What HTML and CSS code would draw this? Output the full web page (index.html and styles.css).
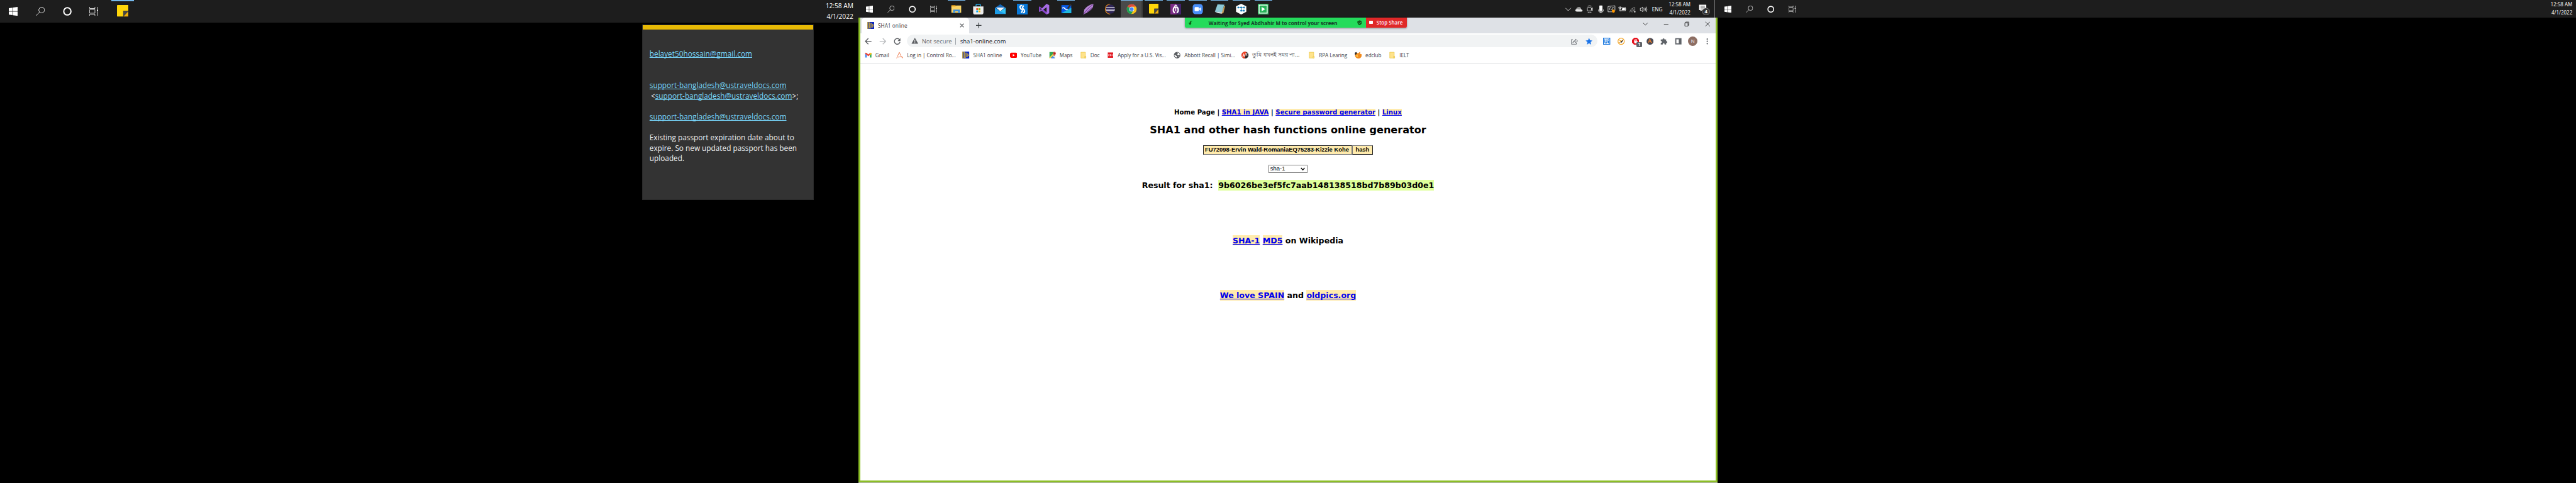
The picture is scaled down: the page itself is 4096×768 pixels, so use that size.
FILE: index.html
```
<!DOCTYPE html>
<html lang="en">
<head>
<meta charset="utf-8">
<title>Desktop</title>
<link rel="stylesheet" href="styles.css">
</head>
<body>
<svg class="defs" aria-hidden="true">
  <symbol id="win" viewBox="0 0 20 20"><path fill="#fff" d="M0 2.8 8.2 1.7V9.5H0zM9.2 1.5 20 0V9.5H9.2zM0 10.5H8.2V18.3L0 17.2zM9.2 10.5H20V20L9.2 18.5z"/></symbol>
  <symbol id="search" viewBox="0 0 20 20"><g fill="none" stroke="#fff" stroke-width="1.2"><circle cx="13" cy="7" r="6.4"/><path d="M8.4 11.6 .4 19.6"/></g></symbol>
  <symbol id="cortana" viewBox="0 0 20 20"><circle cx="10" cy="10" r="8.1" fill="none" stroke="#fff" stroke-width="2.8"/></symbol>
  <symbol id="taskview" viewBox="0 0 20 20"><g fill="none" stroke="#fff" stroke-width="1.1"><path d="M.6 0v3.5h12V0M.6 20v-3.5h12V20M.6 6h12v8H.6zM18.5 0v5M18.5 10v10"/></g><rect x="17" y="6" width="3" height="3" fill="#fff"/></symbol>
  <symbol id="note" viewBox="0 0 26 26"><path fill="#ffd60a" d="M1 0H25L26 1V13H14V26H1L0 25V1z"/><path fill="#f0ae0b" d="M26 13V25L25 26H14z"/><path fill="#474747" d="M14 13H26L14 26z"/></symbol>
  <symbol id="sha" viewBox="0 0 16 16"><path fill="#0a26c4" d="M0 0H16V16H0z"/><path fill="none" stroke="#f5c518" stroke-width="1.1" d="M.6 0V16M2.6 16V1H5V14H7.400V3H9.600V12H11.600V5H13V9H16"/></symbol>
  <symbol id="folder" viewBox="0 0 16 16"><path fill="#ffe38b" stroke="#e8c546" d="M2.500 1.500H12.500V14.500H2.500z"/><path fill="#ffe38b" stroke="#e8c546" d="M11 10.500h2.500v4H11z"/></symbol>
</svg>

<main class="desktop">
  <section class="screen">
    <header class="taskbar tall">
      <span class="cell"><svg><use href="#win"/></svg></span>
      <span class="cell"><svg><use href="#search"/></svg></span>
      <span class="cell"><svg><use href="#cortana"/></svg></span>
      <span class="cell"><svg><use href="#taskview"/></svg></span>
      <span class="cell app open"><svg><use href="#note"/></svg></span>
      <div class="clock"><span>12:58 AM</span><span>4/1/2022</span></div>
    </header>
    <article class="sticky">
      <p><a>belayet50hossain@gmail.com</a></p>
      <p class="gap2"><a>support-bangladesh@ustraveldocs.com</a><br><i>&lt;</i><a>support-bangladesh@ustraveldocs.com</a>&gt;;</p>
      <p class="gap1"><a>support-bangladesh@ustraveldocs.com</a></p>
      <p class="gap1">Existing passport expiration date about to<br>expire. So new updated passport has been<br>uploaded.</p>
    </article>
  </section>

  <section class="screen">
    <header class="taskbar primary">
      <span class="cell"><svg><use href="#win"/></svg></span>
      <span class="cell"><svg><use href="#search"/></svg></span>
      <span class="cell"><svg><use href="#cortana"/></svg></span>
      <span class="cell"><svg><use href="#taskview"/></svg></span>
      <div class="apps">
        <span class="app open"><svg viewBox="0 0 24 24"><path fill="#e8a317" d="M1 3h9l2 2v3H1z"/><path fill="#fbd364" d="M1 6h9l2-2h11v16H1z"/><path fill="#3c8fdc" d="M5 13h15v8h-4v-4H9v4H5z"/></svg></span>
        <span class="app"><svg viewBox="0 0 24 24"><path fill="none" stroke="#29b6f6" stroke-width="1.800" d="M7 6V2.500Q7 1.500 8 1.500h8q1 0 1 1V6"/><path fill="#ececec" d="M.5 6H23.500V20q0 4-4 4H4.500q-4 0-4-4z"/><path fill="#f25022" d="M7.500 10h4v4h-4z"/><path fill="#7fba00" d="M12.500 10h4v4h-4z"/><path fill="#00a4ef" d="M7.500 15h4v4h-4z"/><path fill="#ffb900" d="M12.500 15h4v4h-4z"/></svg></span>
        <span class="app"><svg viewBox="0 0 24 24"><path fill="#1466b8" d="M0 9 12 1l12 8v4H0z"/><path fill="#1c9be6" d="M0 9v14h24V9L12 17z"/><path fill="#33c1f4" d="M24 9v14L12 17z"/><path fill="#f1f6fa" d="M2.500 8.500h19L12 17z"/></svg></span>
        <span class="app open"><svg viewBox="0 0 24 24"><path fill="#0878d8" d="M0 0H24V24H0z"/><path fill="none" stroke="#fff" stroke-width="3" stroke-linecap="round" d="M10.500 4Q6 5 7 8.500T11 12.500Q14 15 10 19M14.500 5Q11 9 14 11.500T17 16Q17.500 19.500 14 20"/></svg></span>
        <span class="app"><svg viewBox="0 0 24 24"><path fill="#8645c9" d="M0 7 2 6 17 19v5L4 14 2 18 0 17z"/><path fill="#a56be3" d="M0 17 17 0l6 3v18l-6 3V8L2 18z"/><path fill="#1d1d1d" d="M3.500 10v5L6 12.500zM17 8v8l-5-4z"/></svg></span>
        <span class="app open"><svg viewBox="0 0 24 24"><path fill="#075be8" d="M1 3H23V21H1z"/><path fill="#20b8dd" d="M1 21 23 9V21z"/><path fill="none" stroke="#fff" stroke-width="2.200" d="M3 10Q6 7 9 11T15 12"/><path fill="none" stroke="#333" stroke-width="3.500" d="M15 11 22 1"/></svg></span>
        <span class="app"><svg viewBox="0 0 24 24"><path fill="#b989d8" d="M1 24 3 13Q10 3 23 0 24 8 17 14 10 20 1 24z"/><path fill="none" stroke="#713a94" stroke-width="1.500" d="M1 24Q10 10 22 2M9 19 20 9"/></svg></span>
        <span class="app"><svg viewBox="0 0 24 24"><path fill="none" stroke="#f2921d" stroke-width="1.600" d="M13 1A11 11 0 1 0 13 23"/><circle cx="13.500" cy="12" r="10.300" fill="#2f2657"/><path stroke="#fff" stroke-width="1.500" d="M4 9H23M3 12H24M4 15H23"/></svg></span>
        <span class="app open active"><svg viewBox="0 0 24 24"><circle cx="12" cy="12" r="11" fill="#fbc116"/><path fill="#dd4b3e" d="M12 12 2.500 6.500A11 11 0 0 1 21.500 6.500H12z"/><path fill="#1a9f57" d="M2.500 6.500A11 11 0 0 0 11 23L16 14.500 12 12z"/><circle cx="12" cy="12" r="5.400" fill="#fff"/><circle cx="12" cy="12" r="4.300" fill="#4688f1"/></svg></span>
        <span class="app open"><svg class="sm"><use href="#note"/></svg></span>
        <span class="app open"><svg viewBox="0 0 24 24"><path fill="#7d2d88" d="M0 0H24V24H0z"/><path fill="#43226a" d="M14 0H24V24H14z"/><g fill="none" stroke="#fff"><path stroke-width="3" d="M10 7Q6.500 9 6.500 14T10 20M14 7q3.500 2 3.500 7T14 20"/><path stroke-width="2" d="M8.500 6 12 3l3.500 3M12 9v7"/></g><circle cx="12" cy="8" r="2" fill="#fff"/></svg></span>
        <span class="app open"><svg viewBox="0 0 24 24"><rect x=".7" y=".7" width="22.600" height="22.600" rx="6" fill="#4a8ff8"/><rect x="5" y="7.500" width="9.500" height="9" rx="2" fill="#fff"/><path fill="#fff" d="M15.500 10.500 19 8v8l-3.500-2.500z"/></svg></span>
        <span class="app open"><svg viewBox="0 0 24 24"><path fill="#c79c54" d="M22 4 24 5 20 21 15 22z"/><path fill="#8fc9d6" d="M7 1 22 2 17 19 1 18z"/><path fill="#e4f2f4" d="M1 18 17 19 16 22 9 21z"/><path stroke="#5aa0b0" stroke-dasharray="1 1" stroke-width="1.500" d="M7 1.500 22 2.500"/></svg></span>
        <span class="app open"><svg viewBox="0 0 24 24"><path fill="#fff" d="M12 0 23.500 5.500V18L12 24 .5 18V5.500z"/><path fill="none" stroke="#1479b8" stroke-width="1.400" d="M5 8.500H19M12 8.500V15.500H17"/><g fill="#1479b8"><circle cx="5.500" cy="8.500" r="2"/><circle cx="12" cy="8.500" r="2"/><circle cx="18.500" cy="8.500" r="2"/><circle cx="12" cy="15.500" r="2"/><circle cx="18" cy="15.500" r="2"/></g></svg></span>
        <span class="app open"><svg viewBox="0 0 24 24"><path fill="#25b357" d="M0 0H24V24H0z"/><path fill="none" stroke="#fff" stroke-width="1.800" d="M3 3H21V21H3z"/><path fill="#fff" d="M8.500 7 16.500 12 8.500 17z"/></svg></span>
      </div>
      <div class="tray">
        <svg viewBox="0 0 24 24"><path class="ln" stroke-width="1.500" d="M6 9.500 12 15.500 18 9.500"/></svg>
        <svg viewBox="0 0 24 24"><path fill="#999" d="M6 11Q8 7 12 7q4 0 5 4l-6 6z"/><path fill="#e8e8e8" d="M8 17.500Q3.500 17.500 4 14.500 5 11 9 12l4 1q3-3 5 0 3 .5 2 3-.5 1.500-3 1.500z"/></svg>
        <svg viewBox="0 0 24 24"><rect class="ln" x="7" y="8.500" width="9" height="7.500" rx="1.500"/><path class="ln" d="M16 11 18.500 9v6L16 13.500M8 5.500q4-2 8 0M8 19q4 2 8 0"/></svg>
        <svg viewBox="0 0 24 24"><rect x="8.500" y="4" width="7" height="12" rx="1" fill="#fff"/><path class="ln" d="M6.500 13v2q0 3 3 3h5q3 0 3-3v-2M12 18v2M9 20h6"/></svg>
        <svg viewBox="0 0 24 24"><path class="ln" d="M4 6 19.500 4.500V15M4 6V18h9M8 14V9l3-1M11 14q4-1 4-5M13 10l2-2 2 2"/><circle cx="16" cy="16.500" r="3.500" fill="#ff9800"/></svg>
        <svg viewBox="0 0 24 24"><rect class="ln" x="8.500" y="8.500" width="10.500" height="7"/><path fill="#fff" d="M12 10h6v4.500h-7zM19.500 10.500h1v3h-1z"/><path class="ln" d="M5 6v2M8 6v2M4 8h5v2q-2.500 2-5 0zM6.500 12v4H9"/></svg>
        <svg viewBox="0 0 24 24"><g class="ln" opacity=".65"><path d="M5 19Q6 10 17 8M8 19q1-7 9-8M11 19q1-5 6-5.500"/></g><path fill="#fff" d="M14 19q0-3 3.500-3v3z"/></svg>
        <svg viewBox="0 0 24 24"><path class="ln" d="M4.500 10h2.500L10 7v11L7 15H4.500zM12.500 10q1.500 2.500 0 5M15 8q3 4.500 0 9M17.500 6.500q4 6 0 12"/></svg>
        <span class="lang">ENG</span>
        <div class="clock"><span>12:58 AM</span><span>4/1/2022</span></div>
        <svg class="notif" viewBox="0 0 26 26"><path fill="#fff" d="M1 2H17V14H8L4 17V14H1z"/><path stroke="#1d1d1d" d="M4 5.500H14M4 8.500H14M4 11.500H12"/><circle cx="16.500" cy="17.500" r="8" fill="#333" stroke="#999"/><text x="16.500" y="21" text-anchor="middle">4</text></svg>
      </div>
    </header>

    <div class="browser">
      <div class="tabs">
        <div class="tab"><svg class="i16"><use href="#sha"/></svg><span>SHA1 online</span><svg class="x" viewBox="0 0 10 10"><path d="M1 1 9 9M9 1 1 9"/></svg></div>
        <svg class="plus" viewBox="0 0 12 12"><path d="M6 0V12M0 6H12"/></svg>
        <div class="winbtns">
          <svg viewBox="0 0 12 12"><path d="M1 3.500 6 8.500 11 3.500"/></svg>
          <svg viewBox="0 0 12 12"><path d="M1 6.500H11"/></svg>
          <svg viewBox="0 0 12 12"><path d="M1.500 3.500H8.500V10.500H1.500zM3.500 3.500V1.500H10.500V8.500H8.500"/></svg>
          <svg viewBox="0 0 12 12"><path d="M1 1 11 11M11 1 1 11"/></svg>
        </div>
      </div>
      <div class="toolbar">
        <div class="navs">
          <svg viewBox="0 0 16 16"><path stroke="#5a5d61" d="M15 8H2M8 1.500 1.500 8 8 14.500"/></svg>
          <svg viewBox="0 0 16 16"><path stroke="#b9bbbe" d="M1 8H14M8 1.500 14.500 8 8 14.500"/></svg>
          <svg viewBox="0 0 16 16"><path stroke="#5a5d61" d="M13 4.200A6.300 6.300 0 1 0 14.200 9.500"/><path fill="#5a5d61" d="M15 1V7.500H8.800z"/></svg>
        </div>
        <div class="omnibox">
          <svg class="warn" viewBox="0 0 16 14"><path fill="#5a5d61" d="M8 0 15.500 13.500H.5z"/><path fill="#fff" d="M7.200 5h1.600v4H7.200zM7.200 10.200h1.600v1.600H7.200z"/></svg>
          <span class="insecure">Not secure</span><span class="url">sha1-online.com</span>
          <svg class="share" viewBox="0 0 16 16"><path fill="none" stroke="#5f6368" stroke-width="1.200" d="M4 4H1V14.500H12V11M4 11Q5 6.500 10 6V3L15 7.200 10 11.200V8.500Q6 8.500 4 11z"/></svg>
          <svg class="star" viewBox="0 0 16 16"><path fill="#1a73e8" d="M8 .5 10.200 5.800 15.700 6.200 11.500 9.800 12.800 15.300 8 12.300 3.200 15.300 4.500 9.800 .3 6.200 5.800 5.800z"/></svg>
        </div>
        <div class="exts">
          <svg viewBox="0 0 16 16"><path fill="#fff" stroke="#1474de" stroke-width="1.800" d="M.9 .9H15.100V15.100H.9z"/><path fill="none" stroke="#1474de" stroke-width="1.800" d="M4 3.500V9Q4 12 6.300 12T8.600 9V3.500M11.800 6.200V12.500M11.800 3v1.800"/></svg>
          <svg viewBox="0 0 16 16"><circle cx="8" cy="8" r="7" fill="#fff" stroke="#f5a21c" stroke-width="1.700"/><path fill="none" stroke="#f5a21c" stroke-width="1.500" d="M3.500 5 8 7.500M4 11 12 5"/><path fill="#222" d="M13 4 9 12 8.500 9 4 11.500z"/></svg>
          <span class="badgewrap"><svg viewBox="0 0 16 16"><path fill="#e5121d" d="M5 0h6l5 5v6l-5 5H5L0 11V5z"/><path fill="#fff" d="M4.500 5h1V8h.7V3.500h1.100V7.500h.6V2.800H9V7.500h.6V3.500h1.200V9l1-1.500h1L11 12.500H6.500L4.500 10z"/></svg><b>1</b></span>
          <svg viewBox="0 0 16 16"><circle cx="8" cy="8" r="7.800" fill="#4b4b55"/><path fill="none" stroke="#e77c2d" stroke-width="1.600" d="M3.500 12.500 7.500 3 10 9.500 12.500 11M5.500 9.500Q9 8 10 10"/></svg>
          <svg viewBox="0 0 16 16"><path fill="#5f6368" d="M1 4H5V3.500a2.200 2.200 0 0 1 4.400 0V4H13V7.500h.4a2.200 2.200 0 0 1 0 4.400H13V15H9.500v-.6a2 2 0 0 0-4 0V15H1V11.500h.6a2 2 0 0 0 0-4H1z"/></svg>
          <svg viewBox="0 0 16 16"><path fill="#5f6368" d="M1 1H15V15H1z"/><path fill="#fff" d="M3.500 3.500H9V12.500H3.500z"/></svg>
          <span class="avatar">N</span>
          <svg viewBox="0 0 16 16"><g fill="#5f6368"><circle cx="8" cy="3" r="1.600"/><circle cx="8" cy="8" r="1.600"/><circle cx="8" cy="13.300" r="1.600"/></g></svg>
        </div>
      </div>
      <nav class="bookmarks">
        <span><svg viewBox="0 0 16 16"><path fill="#4285f4" d="M1 4V13.500H4.500V7z"/><path fill="#34a853" d="M15 4V13.500H11.500V7z"/><path fill="#ea4335" d="M1 4Q2 1.500 4.500 3.500L8 6.500 11.500 3.500 11.500 7.500 8 10.500 4.500 7.500 1 5z"/><path fill="#fbbc04" d="M11.500 3.500Q14.500 1.500 15 4V5.500L11.500 8z"/></svg>Gmail</span>
        <span><svg viewBox="0 0 16 16"><path fill="none" stroke="#f08a62" stroke-width="1.400" d="M1 15 7 1.500 12 12.500Q14 15.500 15.500 13.500 14 11 10 11.500L4 12.500"/></svg>Log in | Control Ro...</span>
        <span><svg><use href="#sha"/></svg>SHA1 online</span>
        <span><svg viewBox="0 0 16 16"><rect y="2.500" width="16" height="11.500" rx="3" fill="#f00"/><path fill="#fff" d="M6.300 5.700 10.800 8.200 6.300 10.800z"/></svg>YouTube</span>
        <span><svg viewBox="0 0 16 16"><path fill="#34a853" d="M1 1H14V14H1z"/><path fill="#4c8bf5" d="M4 15 9 9.500 14 15z"/><path fill="#fbd049" d="M1 13 12 2 14 4 3 15H1z"/><path fill="#e8e8e8" d="M8 9.500 14 15V8z"/><path fill="#d64b3f" d="M12 10Q8 5 8.500 3.500A3.600 3.600 0 0 1 15.500 3.500Q16 5 12 10z"/><circle cx="12" cy="4" r="1.200" fill="#7e201b"/></svg>Maps</span>
        <span><svg><use href="#folder"/></svg>Doc</span>
        <span><svg viewBox="0 0 16 16"><path fill="#e31b23" d="M2 2H14V14H2z"/><path fill="none" stroke="#fff" d="M6 6.500H3.800V9.500H6M9.800 6.500H7.700V9.500H9.700V8.200M11.800 6V10"/></svg>Apply for a U.S. Vis...</span>
        <span><svg viewBox="0 0 16 16"><circle cx="8" cy="8" r="7.300" fill="#5a5d61"/><path fill="#fff" d="M2 7Q5 8 6 9.500L8 10.500 7 13.500Q3 12.500 2 9zM8 2.500 10 5 8 6.500 10.500 8.500 14 7.500Q13.500 3 10 2.200zM11 11 13.500 10 11.500 13z"/></svg>Abbott Recall | Simi...</span>
        <span><svg viewBox="0 0 16 16"><circle cx="8" cy="8" r="7.800" fill="#2b2b2b"/><path fill="#f04023" d="M11 .8A7.800 7.800 0 1 0 7 15.700z"/><path fill="none" stroke="#fff" stroke-width="1.300" d="M2.500 12.500 5 5 7.500 12M3.500 9.500H7M8.500 5H13.500M10 5v4M10 7q3-1 2.500 2"/></svg><em>তুমি যখনই সময় পা...</em></span>
        <span><svg><use href="#folder"/></svg>RPA Learing</span>
        <span><svg viewBox="0 0 16 16"><path fill="#f28a1c" d="M3 1Q5 4 8 4 12 0 13 1 11 3 12 5L16 6Q16 15 8 15.500 0 15 1 6z"/><path fill="#ffc247" d="M8 6q-3 4 1 6-6 1-6-4z"/><path fill="#2b2b2b" d="M1 2 4 1 5 5 2 7 0 6z"/></svg>edclub</span>
        <span><svg><use href="#folder"/></svg>IELT</span>
      </nav>
      <div class="page">
        <div class="links"><span>Home Page | </span><a>SHA1 in JAVA</a> | <a>Secure password generator</a> | <a>Linux</a></div>
        <h1>SHA1 and other hash functions online generator</h1>
        <div class="form"><div class="field">FU72098-Ervin Wald-RomaniaEQ75283-Kizzie Kohe</div><div class="btn">hash</div></div>
        <div class="select">sha-1<svg viewBox="0 0 10 8"><path d="M1 1.500 5 6 9 1.500"/></svg></div>
        <h2 class="result">Result for sha1:&nbsp; <mark>9b6026be3ef5fc7aab148138518bd7b89b03d0e1</mark></h2>
        <h2 class="wiki"><a>SHA-1</a> <a>MD5</a> on Wikipedia</h2>
        <h2 class="love"><a>We love SPAIN</a> and <a>oldpics.org</a></h2>
      </div>
    </div>

    <div class="zoombar">
      <div class="waiting"><svg viewBox="0 0 12 12"><path fill="#0c5c14" d="M11 1Q4 1 4 6H1L5 12 9 6H7Q7 3 11 1z"/></svg><span>Waiting for Syed Abdhahir M to control your screen</span><svg viewBox="0 0 12 12"><path fill="#11591c" d="M6 0 11.500 2V6Q11 10 6 12 1 10 .5 6V2z"/><path fill="none" stroke="#24db5b" stroke-width="1.400" d="M3.200 5.800 5.300 8 9 4.200"/></svg></div>
      <div class="stop"><i></i>Stop Share</div>
    </div>
  </section>

  <section class="screen">
    <header class="taskbar">
      <span class="cell"><svg><use href="#win"/></svg></span>
      <span class="cell"><svg><use href="#search"/></svg></span>
      <span class="cell"><svg><use href="#cortana"/></svg></span>
      <span class="cell"><svg><use href="#taskview"/></svg></span>
      <div class="clock edge"><span>12:58 AM</span><span>4/1/2022</span></div>
    </header>
  </section>
</main>
</body>
</html>
```

FILE: styles.css
```
* { box-sizing: border-box; }
html, body { margin: 0; background: #000; overflow: hidden; }
.defs { position: absolute; width: 0; height: 0; }
svg { display: block; flex: none; }

.desktop {
  zoom: 0.711111;
  display: flex;
  width: 5760px;
  height: 1080px;
  background: #000;
  font-family: "Open Sans", "Noto Sans", sans-serif;
  font-size: 11.4px;
  color: #3c4043;
}
.screen { position: relative; width: 1920px; height: 1080px; flex: none; display: flex; flex-direction: column; }

/* taskbars */
.taskbar { display: flex; height: 40px; flex: none; background: #1d1d1d; color: #fff; }
.cell { width: 48px; display: flex; align-items: center; justify-content: center; }
.cell svg { width: 16px; height: 16px; }
.tall { height: 50px; }
.tall .cell { width: 60px; }
.tall .cell svg { width: 20px; height: 20px; }
.tall .cell.app { width: 51px; margin-left: 9px; border-top: 3px solid #76b9ed; padding-bottom: 3px; }
.tall .cell.app svg { width: 26px; height: 26px; }
.clock { display: flex; flex-direction: column; justify-content: center; line-height: 18px; text-align: right; margin-left: auto; font-size: 11.3px; white-space: nowrap; }
.tall .clock { font-size: 14.3px; line-height: 23px; padding: 0 12px 0 0; }
.clock.edge { padding-right: 8px; }

.apps { display: flex; padding-left: 2.500px; }
.apps .app { position: relative; width: 49px; height: 40px; display: flex; align-items: center; justify-content: center; }
.apps .app svg { width: 24px; height: 24px; }
.apps .app svg.sm { width: 22px; height: 22px; }
.apps .open::before { content: ""; position: absolute; top: 0; left: 4.500px; width: 40px; height: 2px; background: #76b9ed; }
.apps .active { background: #4a4a4a; box-shadow: inset -3px 0 #3c3c3c; }
.apps .active::before { left: 0; width: 49px; }
.tray { display: flex; align-items: center; margin-left: auto; width: 345px; }
.tray svg { width: 24px; height: 24px; margin-right: 0; }
.ln { fill: none; stroke: #fff; stroke-width: 1.1; }
.lang { margin-left: 7px; width: 24px; font-size: 11.6px; }
.tray .clock { margin-left: 7px; width: 55px; }
.tray .notif { width: 26px; height: 26px; margin: 2px 0 0 18px; }
.notif text { fill: #fff; font-size: 10.5px; font-weight: 700; }
.tray::after { content: ""; width: 1px; height: 40px; background: #777; margin-left: 10px; }

/* sticky note */
.sticky { margin: 5px 0 0 1436px; width: 384px; height: 392px; background: #333; border: 1px solid #2a2a2a; border-top: 0; padding: 44px 0 0 15px; font-size: 16.600px; line-height: 23.300px; color: #f0f0f0; white-space: nowrap; position: relative; }
.sticky::before { content: ""; display: block; height: 10px; background: #e6b905; margin: -43px 0 43px -15px; }
.sticky p { margin: 0; }
.sticky i { font-style: normal; margin-left: 3px; }
.sticky .gap1 { margin-top: 23.300px; }
.sticky .gap2 { margin-top: 46.600px; }
.sticky a { color: #77d6fb; text-decoration: underline; text-underline-offset: 1.500px; text-decoration-thickness: 1.300px; text-decoration-skip-ink: none; }

/* browser window */
.browser { flex: none; height: 1039px; border: 5px solid #8cbf26; border-top: 0; background: #fff; box-shadow: 0 1px #fff; display: flex; flex-direction: column; }
.tabs { display: flex; align-items: center; height: 34px; background: #dee1e6; padding-left: 3px; }
.tab { display: flex; align-items: center; width: 240px; height: 34px; background: #fff; border-radius: 8px 8px 0 0; padding: 0 11px 0 12px; font-size: 11.6px; }
.i16 { width: 16px; height: 16px; margin-right: 8px; }
.tab .x { width: 10px; height: 10px; margin-left: auto; }
.tab .x path { stroke: #45484c; stroke-width: 1.5; }
.plus { width: 12px; height: 12px; margin-left: 16px; }
.plus path { stroke: #3c4043; stroke-width: 1.8; }
.winbtns { display: flex; gap: 34px; margin-left: auto; padding: 0 12px 6px 0; }
.winbtns svg { width: 12px; height: 12px; }
.winbtns path { fill: none; stroke: #111; stroke-width: 1.1; }
.toolbar { display: flex; align-items: center; height: 36px; padding-left: 10px; }
.navs { display: flex; gap: 16px; width: 93px; }
.navs svg { width: 16px; height: 16px; }
.navs path:first-child { fill: none; stroke-width: 1.9; }
.omnibox { display: flex; align-items: center; width: 1544px; height: 28px; border-radius: 14px; background: #f1f3f4; padding: 0 10px; font-size: 13.300px; }
.warn { width: 16px; height: 14px; }
.insecure { margin-left: 8px; color: #6a6d71; padding-right: 8px; line-height: 16px; border-right: 1px solid #9aa0a6; }
.url { margin-left: 9px; color: #202124; }
.share { width: 16px; height: 16px; margin-left: auto; }
.star { width: 16px; height: 16px; margin-left: 16px; }
.exts { display: flex; align-items: center; gap: 16px; padding-left: 14px; }
.exts svg { width: 16px; height: 16px; }
.badgewrap { position: relative; }
.badgewrap b { position: absolute; left: 10px; top: 10px; width: 12px; height: 12px; border-radius: 2px; background: #5f6368; color: #fff; font-size: 9.500px; line-height: 12px; text-align: center; }
.avatar { width: 22px; height: 22px; margin: 0 -3px; border-radius: 50%; background: #8d6e63; color: #fff; font-size: 11px; line-height: 22px; text-align: center; }
.bookmarks { display: grid; grid-template-columns: 71px 148px 106px 87px 69px 61px 149px 152px 149px 104px 76px 60px; align-items: center; height: 33px; padding: 0 0 5px 9px; border-bottom: 1px solid #dadce0; white-space: nowrap; }
.bookmarks span { display: flex; align-items: center; gap: 8px; }
.bookmarks svg { width: 16px; height: 16px; }
.bookmarks em { font-style: normal; font-size: 12.8px; }

/* page */
.page { flex: 1; display: flex; flex-direction: column; align-items: center; background: #fff; color: #000; font-family: "DejaVu Sans", Verdana, sans-serif; font-weight: 700; white-space: nowrap; }
.page a { color: #00e; background: #ffebad; text-decoration: underline; text-decoration-skip-ink: none; }
.links { margin-top: 99px; font-size: 14.350px; line-height: 20px; }
.page h1 { margin: 15px 0 0; font-size: 22.650px; line-height: 28px; }
.form { display: flex; margin-top: 20px; height: 21px; font: 700 13.270px/17px "Liberation Sans", Arial, sans-serif; }
.field { width: 333px; border: 2px solid; border-color: #222 #767676 #767676 #222; background: #ffebad; padding-left: 3px; }
.btn { width: 47px; border: 2px solid; border-color: #767676 #222 #222 #767676; background: #ffebad; text-align: center; }
.select { display: flex; align-items: center; justify-content: space-between; width: 90px; height: 19px; margin-top: 22px; padding: 0 5px 0 4px; border: 1px solid #767676; border-radius: 2px; font: 400 13.300px/17px "Liberation Sans", Arial, sans-serif; }
.select svg { width: 10px; height: 8px; }
.select path { fill: none; stroke: #111; stroke-width: 2; }
.page h2 { margin: 0; font-size: 17.700px; line-height: 22px; }
.page h2 a, mark { padding: 1px 0; }
mark { background: #dfff9b; color: #000; }
.page .result { margin-top: 17px; }
.page .wiki { margin-top: 101px; }
.page .love { margin-top: 101px; }

/* screen sharing bar */
.zoombar { position: absolute; left: 729px; top: 40px; display: flex; width: 497px; height: 22px; border-radius: 0 0 4px 4px; overflow: hidden; box-shadow: 0 1px 4px #0006; white-space: nowrap; }
.waiting { display: flex; align-items: center; width: 406px; padding: 0 10px 0 7px; background: #24db5b; color: #17382a; font-size: 11.300px; font-weight: 700; }
.waiting span { flex: 1; text-align: center; padding-right: 8px; }
.waiting svg { width: 11px; height: 12px; }
.stop { display: flex; align-items: center; width: 91px; background: #e02828; color: #fff; padding: 0 0 2px 7px; font-size: 11.2px; font-weight: 600; }
.stop i { width: 8px; height: 8px; margin-right: 8px; border-radius: 1px; background: #fff; }
```
